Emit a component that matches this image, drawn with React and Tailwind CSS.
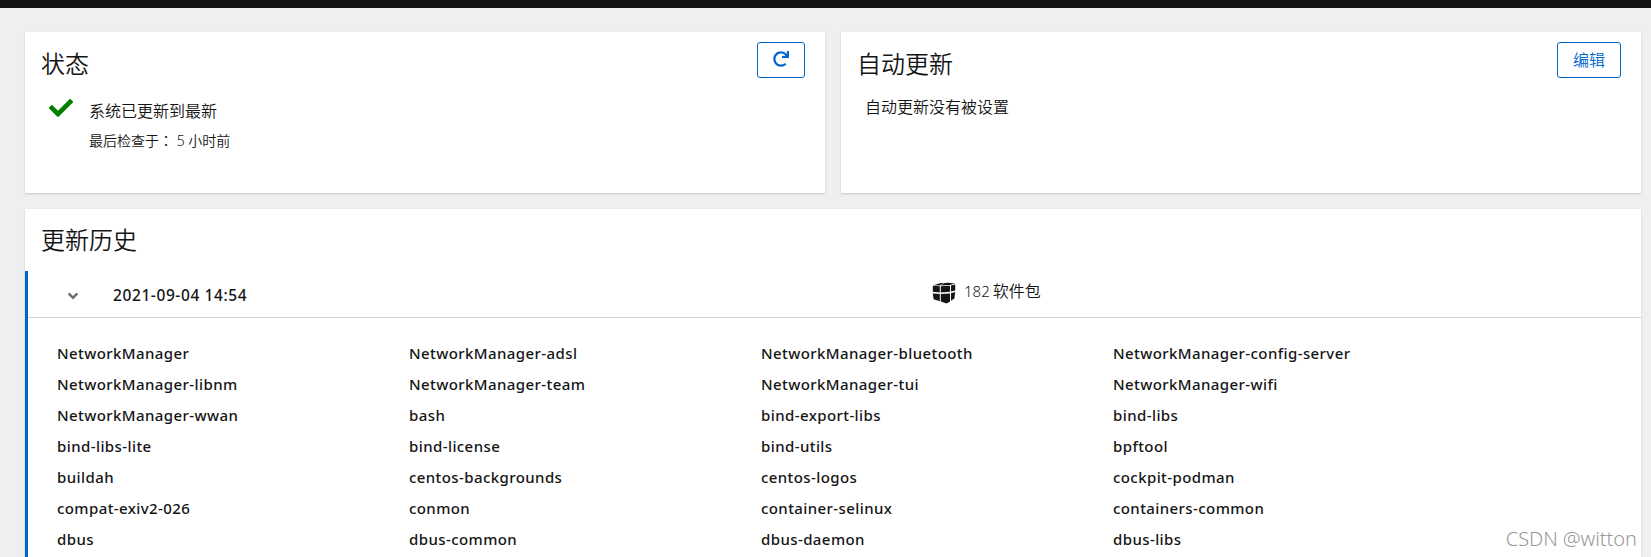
import { FaCheck, FaRedo, FaAngleDown } from "react-icons/fa";

const packages = [
  "NetworkManager", "NetworkManager-adsl", "NetworkManager-bluetooth", "NetworkManager-config-server",
  "NetworkManager-libnm", "NetworkManager-team", "NetworkManager-tui", "NetworkManager-wifi",
  "NetworkManager-wwan", "bash", "bind-export-libs", "bind-libs",
  "bind-libs-lite", "bind-license", "bind-utils", "bpftool",
  "buildah", "centos-backgrounds", "centos-logos", "cockpit-podman",
  "compat-exiv2-026", "conmon", "container-selinux", "containers-common",
  "dbus", "dbus-common", "dbus-daemon", "dbus-libs",
];

function BundleIcon() {
  return (
    <svg viewBox="0 0 24 22" className="h-[22px] w-6" fill="currentColor">
      <path d="M1.2 3.2 9 1 12 1.2 7.6 3.6Z M12.6 1 16 0.8 23.2 1.6 17.8 3 9 3.4Z" />
      <path d="M0.8 3.8 7.8 4.2V10.4L0.8 9.8Z" />
      <path d="M8.8 4.2 18 3.8V9.8L8.8 10.4Z" />
      <path d="M19 3.6 23.2 2.6V8.4L19 9.6Z" />
      <path d="M0.8 11.4 7.8 12V19.2L1.6 17.2Z" />
      <path d="M8.8 12 18 11.4V19.6L14.6 21.6 8.8 19.6Z" />
      <path d="M19 11.2 23.2 10 22.4 16.6 19 18.8Z" />
    </svg>
  );
}

function Title({ children }) {
  return <h2 className="text-[24px] leading-9 font-normal">{children}</h2>;
}

export default function App() {
  return (
    <div className="relative flex h-[557px] w-full flex-col overflow-hidden bg-[#efefef] font-['Noto_Sans','Noto_Sans_CJK_SC_DemiLight','Noto_Sans_CJK_SC',sans-serif] text-[#151515]">
      <div className="h-2 shrink-0 bg-[#151515]" />
      <main className="flex flex-1 flex-col gap-4 pt-6 pr-[10px] pl-[25px]">
        <div className="grid h-[161px] shrink-0 grid-cols-2 gap-4">
          <section className="bg-white px-4 pt-[10px] shadow-[0_1px_2px_rgba(3,3,3,0.16)]">
            <div className="flex items-start justify-between pr-1">
              <div className="pt-1"><Title>状态</Title></div>
              <button className="flex h-9 w-12 items-center justify-center rounded-[3px] border border-[#0066cc] pb-0.5 text-[#0066cc]">
                <FaRedo className="size-4" />
              </button>
            </div>
            <div className="flex pt-[10px] pl-2">
              <FaCheck className="mt-1 size-6 text-[#008000]" />
              <div className="pl-4">
                <p className="pt-[7px] text-[16px] leading-6">系统已更新到最新</p>
                <p className="pt-[7px] text-[14px] leading-[21px]">
                  最后检查于<span className="font-['Noto_Sans_CJK_TC',sans-serif]">：</span> <span className="font-light">5</span> 小时前
                </p>
              </div>
            </div>
          </section>
          <section className="bg-white px-4 pt-[10px] shadow-[0_1px_2px_rgba(3,3,3,0.16)]">
            <div className="flex items-start justify-between pr-1">
              <div className="pt-1"><Title>自动更新</Title></div>
              <button className="flex h-9 w-16 items-center justify-center rounded-[3px] border border-[#0066cc] text-[16px] text-[#0066cc]">
                编辑
              </button>
            </div>
            <p className="pt-[13px] pl-2 text-[16px] leading-6">自动更新没有被设置</p>
          </section>
        </div>
        <section className="flex flex-1 flex-col bg-white shadow-[0_1px_2px_rgba(3,3,3,0.16)]">
          <div className="h-[62px] shrink-0 px-4 pt-[13px]"><Title>更新历史</Title></div>
          <div className="flex flex-1 flex-col border-l-[3px] border-[#0066cc]">
            <div className="flex h-[47px] shrink-0 border-b border-[#d2d2d2]">
              <div className="flex w-[904px] items-center pt-1 pl-[37px]">
                <FaAngleDown className="size-4 text-[#6a6e73]" />
                <span className="pl-8 text-[15.5px] font-medium tracking-[0.6px]">2021-09-04 14:54</span>
              </div>
              <div className="flex items-center gap-2 pb-[7px]">
                <div className="pt-1"><BundleIcon /></div>
                <span className="text-[16px]"><span className="text-[15px] font-light">182</span><span className="pl-[3px]">软件包</span></span>
              </div>
            </div>
            <ul className="ml-[29px] grid w-[1408px] grid-cols-4 pt-5">
              {packages.map((name) => (
                <li key={name} className="h-[31px] text-[15px] leading-[31px] font-medium tracking-[0.41px]">{name}</li>
              ))}
            </ul>
          </div>
        </section>
      </main>
      <div className="absolute right-[14px] bottom-[4px] text-[20px] leading-7 font-light tracking-[-0.05px] text-[#999999]">CSDN @witton</div>
    </div>
  );
}
